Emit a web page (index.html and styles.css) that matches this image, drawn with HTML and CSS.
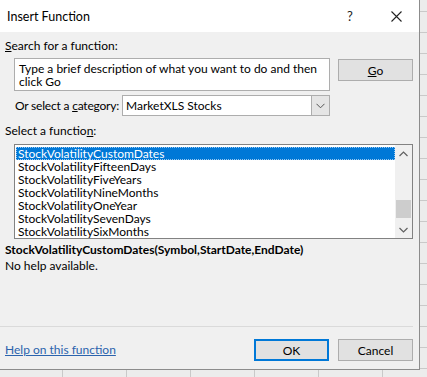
FILE: index.html
```html
<!DOCTYPE html>
<html>
<head>
<meta charset="utf-8">
<title>Insert Function</title>
<link rel="stylesheet" href="styles.css">
</head>
<body>
<div class="dialog">
  <div class="titlebar">
    <span class="title">Insert Function</span>
    <span class="tb-btn help">?</span>
    <span class="tb-btn close">
      <svg width="11" height="11" viewBox="0 0 11 11"><path d="M0.5 0.5 L10.5 10.5 M10.5 0.5 L0.5 10.5" stroke="#222" stroke-width="1.1" fill="none"/></svg>
    </span>
  </div>
  <div class="body">
    <div class="label top-label"><u>S</u>earch for a function:</div>
    <div class="search-row">
      <div class="searchbox">Type a brief description of what you want to do and then click Go</div>
      <div class="btn go"><u>G</u>o</div>
    </div>
    <div class="cat-row">
      <span class="cat-label">Or select a <u>c</u>ategory:</span>
      <div class="select">
        <span class="select-text">MarketXLS Stocks</span>
        <span class="select-arrow">
          <svg width="9" height="6" viewBox="0 0 9 6"><path d="M0.5 0.8 L4.5 4.8 L8.5 0.8" stroke="#555" stroke-width="1" fill="none"/></svg>
        </span>
      </div>
    </div>
    <div class="label fn-label">Select a functio<u>n</u>:</div>
    <div class="listbox">
      <div class="items">
        <div class="item selected">StockVolatilityCustomDates</div>
        <div class="item">StockVolatilityFifteenDays</div>
        <div class="item">StockVolatilityFiveYears</div>
        <div class="item">StockVolatilityNineMonths</div>
        <div class="item">StockVolatilityOneYear</div>
        <div class="item">StockVolatilitySevenDays</div>
        <div class="item">StockVolatilitySixMonths</div>
      </div>
      <div class="scrollbar">
        <span class="sb-arrow">
          <svg width="9" height="6" viewBox="0 0 9 6"><path d="M0.5 5 L4.5 1 L8.5 5" stroke="#606060" stroke-width="1.2" fill="none"/></svg>
        </span>
        <span class="sb-track"><span class="sb-thumb"></span></span>
        <span class="sb-arrow">
          <svg width="9" height="6" viewBox="0 0 9 6"><path d="M0.5 1 L4.5 5 L8.5 1" stroke="#606060" stroke-width="1.2" fill="none"/></svg>
        </span>
      </div>
    </div>
    <div class="signature">StockVolatilityCustomDates(Symbol,StartDate,EndDate)</div>
    <div class="label">No help available.</div>
  </div>
  <div class="separator"></div>
  <div class="footer">
    <a class="link" href="#">Help on this function</a>
    <div class="buttons">
      <div class="btn ok">OK</div>
      <div class="btn">Cancel</div>
    </div>
  </div>
</div>
</body>
</html>
```
FILE: styles.css
```css
html, body {
  margin: 0;
  padding: 0;
}
body {
  width: 427px;
  height: 377px;
  overflow: hidden;
  background-color: #ececec;
  background-image:
    linear-gradient(to right, #c9c9c9 1px, transparent 1px),
    linear-gradient(to bottom, #c9c9c9 1px, transparent 1px);
  background-size: 64px 100%, 100% 21px;
  background-position: 62px 0, 0 11px;
  font-family: Lato, "Noto Sans", sans-serif;
  font-size: 12px;
  color: #000;
}
.dialog {
  width: 419px;
  height: 369px;
  background: #f0f0f0;
  border-right: 1px solid #8c8c8c;
  border-bottom: 1px solid #8c8c8c;
  display: flex;
  flex-direction: column;
}
.titlebar {
  height: 32px;
  background: #fff;
  display: flex;
  align-items: center;
  flex: none;
}
.title {
  flex: 1;
  padding-left: 7px;
  font-size: 12.5px;
}
.tb-btn {
  width: 46px;
  height: 32px;
  display: flex;
  align-items: center;
  justify-content: center;
}
.help {
  font-size: 13px;
  color: #222;
}
.body {
  flex: 1;
  padding: 0 6px 0 5px;
}
.label {
  line-height: 16px;
  height: 16px;
  white-space: nowrap;
}
.top-label {
  margin-top: 6px;
}
.search-row {
  margin: 4px 0 0 9px;
  display: flex;
  align-items: flex-start;
}
.searchbox {
  width: 306px;
  height: 31px;
  background: #fff;
  border: 1px solid #adadad;
  padding: 0 4px;
  line-height: 13px;
  display: flex;
  align-items: center;
}
.btn {
  width: 73px;
  height: 20px;
  background: #e1e1e1;
  border: 1px solid #adadad;
  display: flex;
  align-items: center;
  justify-content: center;
}
.go {
  margin: 1px 0 0 8px;
}
.cat-row {
  margin: 4px 0 0 10px;
  width: 315px;
  display: flex;
  align-items: center;
  gap: 3px;
  height: 21px;
}
.cat-label {
  white-space: nowrap;
  flex: none;
  letter-spacing: -0.2px;
}
.select {
  flex: 1;
  height: 19px;
  background: #fff;
  border: 1px solid #adadad;
  display: flex;
  align-items: center;
}
.select-text {
  flex: 1;
  padding-left: 3px;
}
.select-arrow {
  width: 17px;
  height: 19px;
  background: #e5e5e5;
  border-left: 1px solid #adadad;
  display: flex;
  align-items: center;
  justify-content: center;
}
.fn-label {
  margin-top: 7px;
}
.listbox {
  margin: 5px 0 0 9px;
  width: 397px;
  height: 93px;
  background: #fff;
  border: 1px solid #828282;
  display: flex;
}
.items {
  flex: 1;
  padding: 2px 0 0 1px;
}
.item {
  height: 13px;
  line-height: 13px;
  padding-left: 2px;
  white-space: nowrap;
}
.item.selected {
  background: #0078d7;
  color: #fff;
  outline: 1px dotted #9ac8f0;
  outline-offset: -1px;
}
.scrollbar {
  width: 17px;
  display: flex;
  flex-direction: column;
  background: #f0f0f0;
}
.sb-arrow {
  height: 17px;
  display: flex;
  align-items: center;
  justify-content: center;
}
.sb-track {
  flex: 1;
  display: flex;
  flex-direction: column;
  justify-content: flex-end;
  padding: 0 1px 3px 1px;
}
.sb-thumb {
  height: 18px;
  background: #cdcdcd;
}
.signature {
  margin-top: 3px;
  font-weight: bold;
  line-height: 16px;
  height: 16px;
  white-space: nowrap;
}
.separator {
  height: 1px;
  margin-right: 6px;
  background: #dadada;
  flex: none;
}
.footer {
  height: 42px;
  flex: none;
  display: flex;
  align-items: flex-start;
  padding: 12px 6px 0 5px;
  box-sizing: border-box;
}
.link {
  flex: 1;
  color: #2b63ad;
  text-decoration: underline;
  line-height: 16px;
  margin-top: 3px;
}
.buttons {
  display: flex;
  gap: 9px;
}
.ok {
  width: 71px;
  height: 18px;
  border: 2px solid #0078d7;
}
```
